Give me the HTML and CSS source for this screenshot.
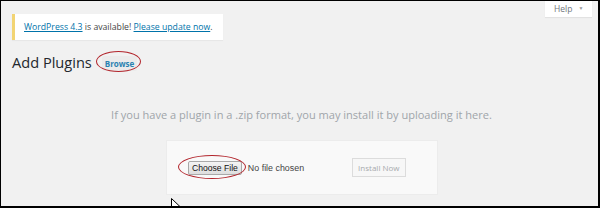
FILE: index.html
```html
<!DOCTYPE html>
<html>
<head>
<meta charset="utf-8">
<link rel="stylesheet" href="styles.css">
</head>
<body>
<div class="frame">
  <div class="help-tab">Help <span class="caret">&#9660;</span></div>
  <div class="notice"><a href="#">WordPress 4.3</a> is available! <a href="#">Please update now</a>.</div>
  <div class="title-row">
    <h1 class="title">Add Plugins</h1>
    <span class="browse-wrap"><span class="browse">Browse</span><span class="ring ring-browse"></span></span>
  </div>
  <p class="intro">If you have a plugin in a .zip format, you may install it by uploading it here.</p>
  <div class="upload">
    <span class="file-wrap"><span class="file-btn">Choose File</span><span class="ring ring-file"></span></span>
    <span class="file-none">No file chosen</span>
    <span class="install">Install Now</span>
  </div>
  <svg class="cursor" width="12" height="18" viewBox="0 0 12 18"><path d="M0.5 0.5 L0.5 15 L4 11.5 L6.5 17 L8.5 16 L6 10.5 L11 10.5 Z" fill="#fff" stroke="#000" stroke-width="1"/></svg>
</div>
</body>
</html>
```
FILE: styles.css
```css
html, body { margin: 0; padding: 0; }
body { width: 600px; height: 208px; overflow: hidden; background: #fff; }
.frame {
  position: relative;
  box-sizing: border-box;
  width: 600px;
  height: 208px;
  border-style: solid;
  border-color: #000;
  border-width: 1px 2px 2px 1px;
  background: #f1f1f1;
  font-family: "Open Sans", "Liberation Sans", sans-serif;
  color: #444;
  overflow: hidden;
  padding: 13px 0 0 11px;
}
.help-tab {
  position: absolute;
  top: -1px;
  right: 6px;
  width: 47px;
  height: 17px;
  background: #fff;
  box-shadow: 0 1px 1px rgba(0,0,0,0.06);
  font-size: 8.5px;
  color: #72777c;
  box-sizing: border-box;
  padding: 3px 0 0 9px;
}
.help-tab .caret { font-size: 5px; color: #999; margin-left: 4px; vertical-align: 2px; }
.notice {
  width: 211px;
  height: 26px;
  box-sizing: border-box;
  background: #fff;
  border-left: 3px solid #f2d473;
  box-shadow: 0 1px 1px rgba(0,0,0,0.04);
  font-size: 8.7px;
  line-height: 26px;
  padding-left: 9px;
  color: #444;
  white-space: nowrap;
}
.notice a { color: #0073aa; text-decoration: underline; }
.title-row { display: flex; align-items: center; margin-top: 11px; height: 22px; }
.title {
  margin: 0;
  font-size: 14.6px;
  font-weight: 400;
  color: #23282d;
  line-height: 22px;
}
.browse-wrap { position: relative; display: flex; margin-left: 10px; margin-top: 3px; }
.browse {
  display: block;
  font-size: 8px;
  font-weight: 700;
  color: #2a82b1;
  background: #ebebeb;
  padding: 2px 3px;
  border-radius: 2px;
  line-height: 11px;
}
.ring {
  position: absolute;
  border: 1.5px solid #b2252c;
  border-radius: 50%;
  box-sizing: border-box;
}
.ring-browse { left: -6px; top: -5px; width: 45px; height: 21px; }
.intro {
  margin: 34px 0 0 -7px;
  text-align: center;
  font-size: 11.05px;
  color: #a0a5aa;
  line-height: 16px;
}
.upload {
  display: flex;
  align-items: center;
  box-sizing: border-box;
  width: 272px;
  height: 55px;
  margin: 17px 0 0 154px;
  background: #f9f9f9;
  border: 1px solid #ececec;
  padding-left: 21px;
  font-family: "Liberation Sans", Arial, sans-serif;
}
.file-wrap { position: relative; display: flex; }
.file-btn {
  display: block;
  font-size: 8.6px;
  color: #111;
  background: linear-gradient(#f4f4f4, #dedede);
  border: 1px solid #a9a9a9;
  border-radius: 2px;
  padding: 1px 3px;
  line-height: 10px;
}
.ring-file { left: -10px; top: -6px; width: 68px; height: 24px; }
.file-none { font-size: 8.9px; color: #444; margin-left: 6px; }
.install {
  margin-left: 48px;
  font-family: "Open Sans", "Liberation Sans", sans-serif;
  font-size: 8px;
  color: #a7aaad;
  background: #f7f7f7;
  border: 1px solid #dcdcdc;
  padding: 0 5px;
  height: 19px;
  line-height: 17px;
  box-sizing: border-box;
}
.cursor { position: absolute; left: 170px; top: 197px; }
```
